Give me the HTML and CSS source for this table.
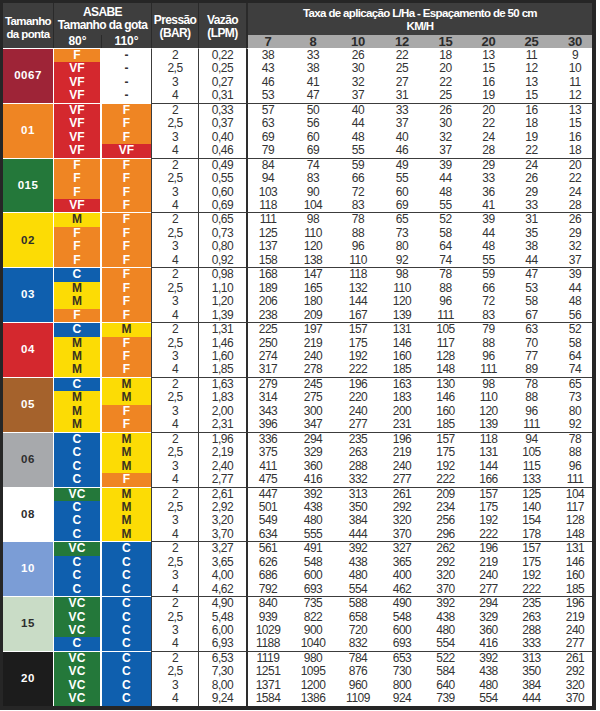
FILE: index.html
```html
<!DOCTYPE html>
<html lang="pt">
<head>
<meta charset="utf-8">
<title>Tabela de pontas</title>
<link rel="stylesheet" href="styles.css">
</head>
<body>
<table class="chart">
<colgroup>
<col class="c-tip"><col class="c-d1"><col class="c-d2"><col class="c-p"><col class="c-v">
<col class="c-s1"><col class="c-s2"><col class="c-s3"><col class="c-s4"><col class="c-s5"><col class="c-s6"><col class="c-s7"><col class="c-s8">
</colgroup>
<thead>
<tr class="ha">
<th rowspan="2" class="h-tip">Tamanho<br>da ponta</th>
<th colspan="2" class="h-asabe">ASABE<br>Tamanho da gota</th>
<th rowspan="2" class="h-p">Pressão<br>(BAR)</th>
<th rowspan="2" class="h-v">Vazão<br>(LPM)</th>
<th colspan="8" class="h-taxa">Taxa de aplicação L/Ha - Espaçamento de 50 cm<br>KM/H</th>
</tr>
<tr class="hb">
<th class="h-d1">80°</th><th class="h-d2">110°</th>
<th class="spd s1">7</th><th class="spd">8</th><th class="spd">10</th><th class="spd">12</th><th class="spd">15</th><th class="spd">20</th><th class="spd">25</th><th class="spd s8">30</th>
</tr>
</thead>
<tbody>
<tr class="g first"><td rowspan="4" class="tip t0067">0067</td><td class="d d1 f">F</td><td class="d d2 na">-</td><td class="p">2</td><td class="v">0,22</td><td class="n s1">38</td><td class="n">33</td><td class="n">26</td><td class="n">22</td><td class="n">18</td><td class="n">13</td><td class="n">11</td><td class="n s8">9</td></tr>
<tr><td class="d d1 vf">VF</td><td class="d d2 na">-</td><td class="p">2,5</td><td class="v">0,25</td><td class="n s1">43</td><td class="n">38</td><td class="n">30</td><td class="n">25</td><td class="n">20</td><td class="n">15</td><td class="n">12</td><td class="n s8">10</td></tr>
<tr><td class="d d1 vf">VF</td><td class="d d2 na">-</td><td class="p">3</td><td class="v">0,27</td><td class="n s1">46</td><td class="n">41</td><td class="n">32</td><td class="n">27</td><td class="n">22</td><td class="n">16</td><td class="n">13</td><td class="n s8">11</td></tr>
<tr><td class="d d1 vf">VF</td><td class="d d2 na">-</td><td class="p">4</td><td class="v">0,31</td><td class="n s1">53</td><td class="n">47</td><td class="n">37</td><td class="n">31</td><td class="n">25</td><td class="n">19</td><td class="n">15</td><td class="n s8">12</td></tr>

<tr class="g"><td rowspan="4" class="tip t01">01</td><td class="d d1 vf">VF</td><td class="d d2 f">F</td><td class="p">2</td><td class="v">0,33</td><td class="n s1">57</td><td class="n">50</td><td class="n">40</td><td class="n">33</td><td class="n">26</td><td class="n">20</td><td class="n">16</td><td class="n s8">13</td></tr>
<tr><td class="d d1 vf">VF</td><td class="d d2 f">F</td><td class="p">2,5</td><td class="v">0,37</td><td class="n s1">63</td><td class="n">56</td><td class="n">44</td><td class="n">37</td><td class="n">30</td><td class="n">22</td><td class="n">18</td><td class="n s8">15</td></tr>
<tr><td class="d d1 vf">VF</td><td class="d d2 f">F</td><td class="p">3</td><td class="v">0,40</td><td class="n s1">69</td><td class="n">60</td><td class="n">48</td><td class="n">40</td><td class="n">32</td><td class="n">24</td><td class="n">19</td><td class="n s8">16</td></tr>
<tr><td class="d d1 vf">VF</td><td class="d d2 vf">VF</td><td class="p">4</td><td class="v">0,46</td><td class="n s1">79</td><td class="n">69</td><td class="n">55</td><td class="n">46</td><td class="n">37</td><td class="n">28</td><td class="n">22</td><td class="n s8">18</td></tr>

<tr class="g"><td rowspan="4" class="tip t015">015</td><td class="d d1 f">F</td><td class="d d2 f">F</td><td class="p">2</td><td class="v">0,49</td><td class="n s1">84</td><td class="n">74</td><td class="n">59</td><td class="n">49</td><td class="n">39</td><td class="n">29</td><td class="n">24</td><td class="n s8">20</td></tr>
<tr><td class="d d1 f">F</td><td class="d d2 f">F</td><td class="p">2,5</td><td class="v">0,55</td><td class="n s1">94</td><td class="n">83</td><td class="n">66</td><td class="n">55</td><td class="n">44</td><td class="n">33</td><td class="n">26</td><td class="n s8">22</td></tr>
<tr><td class="d d1 f">F</td><td class="d d2 f">F</td><td class="p">3</td><td class="v">0,60</td><td class="n s1">103</td><td class="n">90</td><td class="n">72</td><td class="n">60</td><td class="n">48</td><td class="n">36</td><td class="n">29</td><td class="n s8">24</td></tr>
<tr><td class="d d1 vf">VF</td><td class="d d2 f">F</td><td class="p">4</td><td class="v">0,69</td><td class="n s1">118</td><td class="n">104</td><td class="n">83</td><td class="n">69</td><td class="n">55</td><td class="n">41</td><td class="n">33</td><td class="n s8">28</td></tr>

<tr class="g"><td rowspan="4" class="tip t02">02</td><td class="d d1 m">M</td><td class="d d2 f">F</td><td class="p">2</td><td class="v">0,65</td><td class="n s1">111</td><td class="n">98</td><td class="n">78</td><td class="n">65</td><td class="n">52</td><td class="n">39</td><td class="n">31</td><td class="n s8">26</td></tr>
<tr><td class="d d1 f">F</td><td class="d d2 f">F</td><td class="p">2,5</td><td class="v">0,73</td><td class="n s1">125</td><td class="n">110</td><td class="n">88</td><td class="n">73</td><td class="n">58</td><td class="n">44</td><td class="n">35</td><td class="n s8">29</td></tr>
<tr><td class="d d1 f">F</td><td class="d d2 f">F</td><td class="p">3</td><td class="v">0,80</td><td class="n s1">137</td><td class="n">120</td><td class="n">96</td><td class="n">80</td><td class="n">64</td><td class="n">48</td><td class="n">38</td><td class="n s8">32</td></tr>
<tr><td class="d d1 f">F</td><td class="d d2 f">F</td><td class="p">4</td><td class="v">0,92</td><td class="n s1">158</td><td class="n">138</td><td class="n">110</td><td class="n">92</td><td class="n">74</td><td class="n">55</td><td class="n">44</td><td class="n s8">37</td></tr>

<tr class="g"><td rowspan="4" class="tip t03">03</td><td class="d d1 c">C</td><td class="d d2 f">F</td><td class="p">2</td><td class="v">0,98</td><td class="n s1">168</td><td class="n">147</td><td class="n">118</td><td class="n">98</td><td class="n">78</td><td class="n">59</td><td class="n">47</td><td class="n s8">39</td></tr>
<tr><td class="d d1 m">M</td><td class="d d2 f">F</td><td class="p">2,5</td><td class="v">1,10</td><td class="n s1">189</td><td class="n">165</td><td class="n">132</td><td class="n">110</td><td class="n">88</td><td class="n">66</td><td class="n">53</td><td class="n s8">44</td></tr>
<tr><td class="d d1 m">M</td><td class="d d2 f">F</td><td class="p">3</td><td class="v">1,20</td><td class="n s1">206</td><td class="n">180</td><td class="n">144</td><td class="n">120</td><td class="n">96</td><td class="n">72</td><td class="n">58</td><td class="n s8">48</td></tr>
<tr><td class="d d1 f">F</td><td class="d d2 f">F</td><td class="p">4</td><td class="v">1,39</td><td class="n s1">238</td><td class="n">209</td><td class="n">167</td><td class="n">139</td><td class="n">111</td><td class="n">83</td><td class="n">67</td><td class="n s8">56</td></tr>

<tr class="g"><td rowspan="4" class="tip t04">04</td><td class="d d1 c">C</td><td class="d d2 m">M</td><td class="p">2</td><td class="v">1,31</td><td class="n s1">225</td><td class="n">197</td><td class="n">157</td><td class="n">131</td><td class="n">105</td><td class="n">79</td><td class="n">63</td><td class="n s8">52</td></tr>
<tr><td class="d d1 m">M</td><td class="d d2 f">F</td><td class="p">2,5</td><td class="v">1,46</td><td class="n s1">250</td><td class="n">219</td><td class="n">175</td><td class="n">146</td><td class="n">117</td><td class="n">88</td><td class="n">70</td><td class="n s8">58</td></tr>
<tr><td class="d d1 m">M</td><td class="d d2 f">F</td><td class="p">3</td><td class="v">1,60</td><td class="n s1">274</td><td class="n">240</td><td class="n">192</td><td class="n">160</td><td class="n">128</td><td class="n">96</td><td class="n">77</td><td class="n s8">64</td></tr>
<tr><td class="d d1 m">M</td><td class="d d2 f">F</td><td class="p">4</td><td class="v">1,85</td><td class="n s1">317</td><td class="n">278</td><td class="n">222</td><td class="n">185</td><td class="n">148</td><td class="n">111</td><td class="n">89</td><td class="n s8">74</td></tr>

<tr class="g"><td rowspan="4" class="tip t05">05</td><td class="d d1 c">C</td><td class="d d2 m">M</td><td class="p">2</td><td class="v">1,63</td><td class="n s1">279</td><td class="n">245</td><td class="n">196</td><td class="n">163</td><td class="n">130</td><td class="n">98</td><td class="n">78</td><td class="n s8">65</td></tr>
<tr><td class="d d1 m">M</td><td class="d d2 m">M</td><td class="p">2,5</td><td class="v">1,83</td><td class="n s1">314</td><td class="n">275</td><td class="n">220</td><td class="n">183</td><td class="n">146</td><td class="n">110</td><td class="n">88</td><td class="n s8">73</td></tr>
<tr><td class="d d1 m">M</td><td class="d d2 f">F</td><td class="p">3</td><td class="v">2,00</td><td class="n s1">343</td><td class="n">300</td><td class="n">240</td><td class="n">200</td><td class="n">160</td><td class="n">120</td><td class="n">96</td><td class="n s8">80</td></tr>
<tr><td class="d d1 m">M</td><td class="d d2 f">F</td><td class="p">4</td><td class="v">2,31</td><td class="n s1">396</td><td class="n">347</td><td class="n">277</td><td class="n">231</td><td class="n">185</td><td class="n">139</td><td class="n">111</td><td class="n s8">92</td></tr>

<tr class="g"><td rowspan="4" class="tip t06">06</td><td class="d d1 c">C</td><td class="d d2 m">M</td><td class="p">2</td><td class="v">1,96</td><td class="n s1">336</td><td class="n">294</td><td class="n">235</td><td class="n">196</td><td class="n">157</td><td class="n">118</td><td class="n">94</td><td class="n s8">78</td></tr>
<tr><td class="d d1 c">C</td><td class="d d2 m">M</td><td class="p">2,5</td><td class="v">2,19</td><td class="n s1">375</td><td class="n">329</td><td class="n">263</td><td class="n">219</td><td class="n">175</td><td class="n">131</td><td class="n">105</td><td class="n s8">88</td></tr>
<tr><td class="d d1 c">C</td><td class="d d2 m">M</td><td class="p">3</td><td class="v">2,40</td><td class="n s1">411</td><td class="n">360</td><td class="n">288</td><td class="n">240</td><td class="n">192</td><td class="n">144</td><td class="n">115</td><td class="n s8">96</td></tr>
<tr><td class="d d1 c">C</td><td class="d d2 f">F</td><td class="p">4</td><td class="v">2,77</td><td class="n s1">475</td><td class="n">416</td><td class="n">332</td><td class="n">277</td><td class="n">222</td><td class="n">166</td><td class="n">133</td><td class="n s8">111</td></tr>

<tr class="g"><td rowspan="4" class="tip t08">08</td><td class="d d1 vc">VC</td><td class="d d2 m">M</td><td class="p">2</td><td class="v">2,61</td><td class="n s1">447</td><td class="n">392</td><td class="n">313</td><td class="n">261</td><td class="n">209</td><td class="n">157</td><td class="n">125</td><td class="n s8">104</td></tr>
<tr><td class="d d1 c">C</td><td class="d d2 m">M</td><td class="p">2,5</td><td class="v">2,92</td><td class="n s1">501</td><td class="n">438</td><td class="n">350</td><td class="n">292</td><td class="n">234</td><td class="n">175</td><td class="n">140</td><td class="n s8">117</td></tr>
<tr><td class="d d1 c">C</td><td class="d d2 m">M</td><td class="p">3</td><td class="v">3,20</td><td class="n s1">549</td><td class="n">480</td><td class="n">384</td><td class="n">320</td><td class="n">256</td><td class="n">192</td><td class="n">154</td><td class="n s8">128</td></tr>
<tr><td class="d d1 c">C</td><td class="d d2 m">M</td><td class="p">4</td><td class="v">3,70</td><td class="n s1">634</td><td class="n">555</td><td class="n">444</td><td class="n">370</td><td class="n">296</td><td class="n">222</td><td class="n">178</td><td class="n s8">148</td></tr>

<tr class="g"><td rowspan="4" class="tip t10">10</td><td class="d d1 vc">VC</td><td class="d d2 c">C</td><td class="p">2</td><td class="v">3,27</td><td class="n s1">561</td><td class="n">491</td><td class="n">392</td><td class="n">327</td><td class="n">262</td><td class="n">196</td><td class="n">157</td><td class="n s8">131</td></tr>
<tr><td class="d d1 c">C</td><td class="d d2 c">C</td><td class="p">2,5</td><td class="v">3,65</td><td class="n s1">626</td><td class="n">548</td><td class="n">438</td><td class="n">365</td><td class="n">292</td><td class="n">219</td><td class="n">175</td><td class="n s8">146</td></tr>
<tr><td class="d d1 c">C</td><td class="d d2 c">C</td><td class="p">3</td><td class="v">4,00</td><td class="n s1">686</td><td class="n">600</td><td class="n">480</td><td class="n">400</td><td class="n">320</td><td class="n">240</td><td class="n">192</td><td class="n s8">160</td></tr>
<tr><td class="d d1 c">C</td><td class="d d2 c">C</td><td class="p">4</td><td class="v">4,62</td><td class="n s1">792</td><td class="n">693</td><td class="n">554</td><td class="n">462</td><td class="n">370</td><td class="n">277</td><td class="n">222</td><td class="n s8">185</td></tr>

<tr class="g"><td rowspan="4" class="tip t15">15</td><td class="d d1 vc">VC</td><td class="d d2 c">C</td><td class="p">2</td><td class="v">4,90</td><td class="n s1">840</td><td class="n">735</td><td class="n">588</td><td class="n">490</td><td class="n">392</td><td class="n">294</td><td class="n">235</td><td class="n s8">196</td></tr>
<tr><td class="d d1 vc">VC</td><td class="d d2 c">C</td><td class="p">2,5</td><td class="v">5,48</td><td class="n s1">939</td><td class="n">822</td><td class="n">658</td><td class="n">548</td><td class="n">438</td><td class="n">329</td><td class="n">263</td><td class="n s8">219</td></tr>
<tr><td class="d d1 vc">VC</td><td class="d d2 c">C</td><td class="p">3</td><td class="v">6,00</td><td class="n s1">1029</td><td class="n">900</td><td class="n">720</td><td class="n">600</td><td class="n">480</td><td class="n">360</td><td class="n">288</td><td class="n s8">240</td></tr>
<tr><td class="d d1 c">C</td><td class="d d2 c">C</td><td class="p">4</td><td class="v">6,93</td><td class="n s1">1188</td><td class="n">1040</td><td class="n">832</td><td class="n">693</td><td class="n">554</td><td class="n">416</td><td class="n">333</td><td class="n s8">277</td></tr>

<tr class="g"><td rowspan="4" class="tip t20">20</td><td class="d d1 vc">VC</td><td class="d d2 c">C</td><td class="p">2</td><td class="v">6,53</td><td class="n s1">1119</td><td class="n">980</td><td class="n">784</td><td class="n">653</td><td class="n">522</td><td class="n">392</td><td class="n">313</td><td class="n s8">261</td></tr>
<tr><td class="d d1 vc">VC</td><td class="d d2 c">C</td><td class="p">2,5</td><td class="v">7,30</td><td class="n s1">1251</td><td class="n">1095</td><td class="n">876</td><td class="n">730</td><td class="n">584</td><td class="n">438</td><td class="n">350</td><td class="n s8">292</td></tr>
<tr><td class="d d1 vc">VC</td><td class="d d2 c">C</td><td class="p">3</td><td class="v">8,00</td><td class="n s1">1371</td><td class="n">1200</td><td class="n">960</td><td class="n">800</td><td class="n">640</td><td class="n">480</td><td class="n">384</td><td class="n s8">320</td></tr>
<tr><td class="d d1 vc">VC</td><td class="d d2 c">C</td><td class="p">4</td><td class="v">9,24</td><td class="n s1">1584</td><td class="n">1386</td><td class="n">1109</td><td class="n">924</td><td class="n">739</td><td class="n">554</td><td class="n">444</td><td class="n s8">370</td></tr>
</tbody>
</table>
</body>
</html>
```

FILE: styles.css
```css
* { box-sizing: border-box; }

body {
  margin: 0;
  background: #ffffff;
  font-family: "Liberation Sans", Arial, sans-serif;
}

.chart {
  border-collapse: separate;
  border-spacing: 0;
  table-layout: fixed;
  width: 596px;
  border-style: solid;
  border-color: #262626;
  border-width: 3px 4px 4px 3px;
}

.c-tip { width: 51px; }
.c-d1 { width: 48px; }
.c-d2 { width: 49px; }
.c-p { width: 47px; }
.c-v { width: 48px; }
.c-s1 { width: 44px; }
.c-s2 { width: 46px; }
.c-s3 { width: 44px; }
.c-s4 { width: 44px; }
.c-s5 { width: 43px; }
.c-s6 { width: 43px; }
.c-s7 { width: 43px; }
.c-s8 { width: 39px; }

th, td {
  padding: 0;
  text-align: center;
  white-space: nowrap;
  overflow: hidden;
}

/* header */
th {
  background: #3e3e3e;
  color: #ffffff;
  font-weight: bold;
  font-size: 12px;
  line-height: 13px;
  letter-spacing: -0.6px;
}
.ha th { height: 32px; }
.hb th { height: 13px; }
.h-tip { border-right: 1px solid #2a2a2a; padding-top: 5px; font-size: 11.5px; }
.h-p, .h-v { border-left: 1px solid #2a2a2a; padding-top: 3px; }
.h-asabe { vertical-align: top; padding-top: 3px; }
.h-taxa {
  vertical-align: top;
  padding-top: 4px;
  border-left: 2px solid #2a2a2a;
  font-size: 11.5px;
  letter-spacing: -0.65px;
}
.h-d1 { border-right: 1px solid #2a2a2a; }
.h-d1, .h-d2 { vertical-align: bottom; line-height: 13px; letter-spacing: 0; }
.spd {
  background: #a9a9a9;
  color: #2b2b2b;
  font-size: 13px;
  line-height: 13px;
  letter-spacing: -0.3px;
}
.spd.s1 { border-left: 2px solid #2a2a2a; padding-right: 2px; }
.spd.s8 { padding-left: 5px; }

/* body */
td {
  height: 13.45px;
  line-height: 13.45px;
  font-size: 12px;
  letter-spacing: -0.5px;
  color: #333333;
}
.g td { border-top: 1px solid #ffffff; }
.g:not(.first) td.p,
.g:not(.first) td.v,
.g:not(.first) td.n { border-top-color: #3c3c3c; }

.p, .v { border-left: 1px solid #3c3c3c; }
.n.s1 { border-left: 2px solid #2e2e2e; padding-right: 2px; }
.n.s8 { padding-left: 5px; }

.tip {
  font-weight: bold;
  font-size: 11.5px;
  letter-spacing: 0.5px;
  color: #ffffff;
  border-right: 1px solid #ffffff;
}
.t0067 { background: #9e2437; }
.t01 { background: #ef8523; }
.t015 { background: #24783a; }
.t02 { background: #fcdc05; color: #2e2e2e; }
.t03 { background: #0f5fae; }
.t04 { background: #d4282e; }
.t05 { background: #a5622c; }
.t06 { background: #a7a9ac; color: #2e2e2e; }
.t08 { background: #ffffff; color: #2e2e2e; }
.t10 { background: #7b9dd6; }
.t15 { background: #c9dcc6; color: #2e2e2e; }
.t20 { background: #1c1c1c; }

.d {
  font-weight: bold;
  font-size: 12px;
  letter-spacing: 0.2px;
  color: #ffffff;
}
.d1 { border-right: 2px solid #ffffff; }
.f { background: #ef8523; }
.vf { background: #d4282e; }
.m { background: #fcdc05; color: #3a3320; }
.c { background: #0f5fae; }
.vc { background: #24783a; }
.na { background: #ffffff; color: #333333; }
```
